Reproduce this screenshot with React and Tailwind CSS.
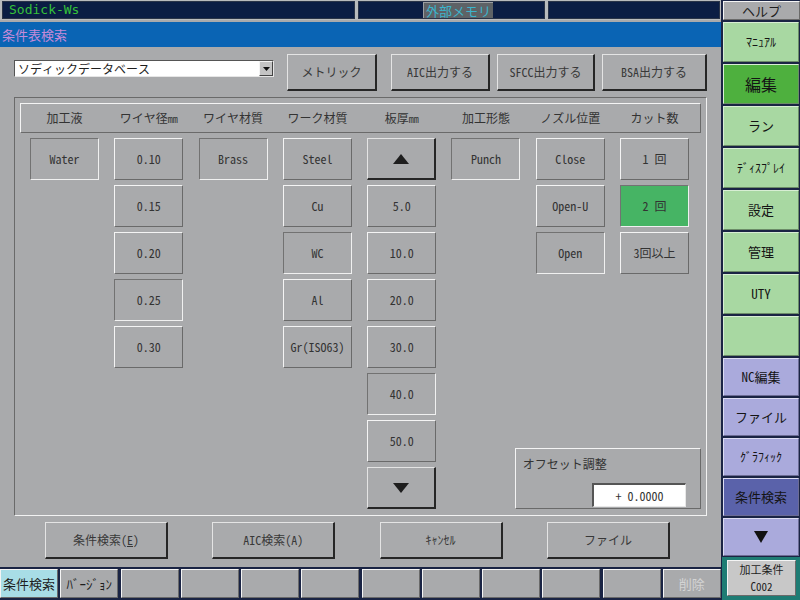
import React from 'react';

const up = "border border-t-[#f4f4f4] border-l-[#f4f4f4] border-b-[#6a6a6a] border-r-[#6a6a6a]";
const down = "border border-t-[#727272] border-l-[#727272] border-b-[#f0f0f0] border-r-[#f0f0f0]";
const heavy = "border-t border-l border-t-[#e4e4e4] border-l-[#e4e4e4] border-b-2 border-r-2 border-b-[#262626] border-r-[#262626]";

const TriUp = () => (
  <svg width="16" height="10" viewBox="0 0 16 10"><path d="M8 0 L16 10 L0 10Z" fill="#1e1e1e" /></svg>
);
const TriDown = () => (
  <svg width="16" height="10" viewBox="0 0 16 10"><path d="M0 0 L16 0 L8 10Z" fill="#1e1e1e" /></svg>
);

const cells = [
  { t: 'Water', s: 'down', c: 'col-start-1 row-start-1' },
  { t: '0.10', s: 'up', c: 'col-start-2 row-start-1' },
  { t: '0.15', s: 'up', c: 'col-start-2 row-start-2' },
  { t: '0.20', s: 'up', c: 'col-start-2 row-start-3' },
  { t: '0.25', s: 'down', c: 'col-start-2 row-start-4' },
  { t: '0.30', s: 'up', c: 'col-start-2 row-start-5' },
  { t: 'Brass', s: 'down', c: 'col-start-3 row-start-1' },
  { t: 'Steel', s: 'up', c: 'col-start-4 row-start-1' },
  { t: 'Cu', s: 'up', c: 'col-start-4 row-start-2' },
  { t: 'WC', s: 'down', c: 'col-start-4 row-start-3' },
  { t: 'Al', s: 'up', c: 'col-start-4 row-start-4' },
  { t: 'Gr(ISO63)', s: 'up', c: 'col-start-4 row-start-5' },
  { t: 'UP', s: 'arrow', c: 'col-start-5 row-start-1' },
  { t: '5.0', s: 'up', c: 'col-start-5 row-start-2' },
  { t: '10.0', s: 'up', c: 'col-start-5 row-start-3' },
  { t: '20.0', s: 'up', c: 'col-start-5 row-start-4' },
  { t: '30.0', s: 'up', c: 'col-start-5 row-start-5' },
  { t: '40.0', s: 'down', c: 'col-start-5 row-start-6' },
  { t: '50.0', s: 'up', c: 'col-start-5 row-start-7' },
  { t: 'DOWN', s: 'arrow', c: 'col-start-5 row-start-8' },
  { t: 'Punch', s: 'down', c: 'col-start-6 row-start-1' },
  { t: 'Close', s: 'up', c: 'col-start-7 row-start-1' },
  { t: 'Open-U', s: 'up', c: 'col-start-7 row-start-2' },
  { t: 'Open', s: 'down', c: 'col-start-7 row-start-3' },
  { t: '1 回', s: 'up', c: 'col-start-8 row-start-1' },
  { t: '2 回', s: 'green', c: 'col-start-8 row-start-2' },
  { t: '3回以上', s: 'up', c: 'col-start-8 row-start-3' },
];

const headers = [
  ['加工液', ''],
  ['ワイヤ径', 'mm'],
  ['ワイヤ材質', ''],
  ['ワーク材質', ''],
  ['板厚', 'mm'],
  ['加工形態', ''],
  ['ノズル位置', ''],
  ['カット数', ''],
];

function Cell({ t, s, c }) {
  let cls = up;
  if (s === 'down') cls = down;
  if (s === 'green') cls = down + ' bg-[#46b464]';
  if (s === 'arrow') cls = heavy;
  return (
    <div className={`${c} ${cls} flex items-center justify-center text-[12px] text-[#333] whitespace-nowrap`}>
      {t === 'UP' ? <TriUp /> : t === 'DOWN' ? <TriDown /> : t}
    </div>
  );
}

function TopBar() {
  return (
    <div className="h-[20px] bg-[#b9bbbd] flex items-stretch py-[1px] pl-[2px] pr-[1px] gap-[3px]">
      <div className="w-[353px] bg-[#0b1d44] border border-[#2a3448] flex items-center pl-[6px] text-[#35c23a] text-[13px] [font-family:'DejaVu_Sans_Mono',monospace]">
        Sodick-Ws
      </div>
      <div className="w-[187px] bg-[#0b1d44] border border-[#2a3448] flex items-stretch">
        <span className="ml-[64px] px-[2px] bg-[#5e6266] text-[#3cb4cc] text-[13px] leading-none flex items-center border-t border-l border-t-[#9a9ea2] border-l-[#9a9ea2]">
          外部メモリ
        </span>
      </div>
      <div className="flex-1 bg-[#0b1d44] border border-[#2a3448]" />
    </div>
  );
}

function Frame() {
  return (
    <div className="mt-[6px] w-[693px] border border-t-[#6a6a6a] border-l-[#6a6a6a] border-b-[#f2f2f2] border-r-[#f2f2f2] pt-[5px] px-[5px] pb-[6px]">
      <div className={`h-[30px] ${up} grid grid-cols-[repeat(8,69px)] gap-x-[15.3px] pl-[9px] items-center`}>
        {headers.map(([h, u]) => (
          <div key={h} className="text-center text-[12px] text-[#333] whitespace-nowrap">
            {h}
            {u && <span className="text-[10px]">{u}</span>}
          </div>
        ))}
      </div>
      <div className="mt-[5px] ml-[10px] grid grid-cols-[repeat(8,69px)] grid-rows-[repeat(8,42px)] gap-x-[15.3px] gap-y-[5px]">
        {cells.map((cell) => (
          <Cell key={cell.t} {...cell} />
        ))}
        <div className={`col-start-7 col-span-2 row-start-7 row-span-2 mt-[28px] -ml-[21px] -mr-[12px] ${up} flex flex-col pt-[8px] pl-[7px]`}>
          <div className="text-[12px] text-[#333] leading-[14px]">オフセット調整</div>
          <div className="mt-auto mb-[1px] self-end mr-[14px] w-[94px] h-[24px] bg-white border-t-2 border-l-2 border-t-[#555] border-l-[#555] border-b border-r border-b-[#e8e8e8] border-r-[#e8e8e8] flex items-center justify-center text-[12px] text-[#333]">
            + 0.0000
          </div>
        </div>
      </div>
    </div>
  );
}

function Main() {
  const btn = `${heavy} h-[37px] flex items-center justify-center text-[12px] text-[#383838] whitespace-nowrap`;
  return (
    <div className="h-[520px] flex flex-col pl-[14px] pt-[7px]">
      <div className="flex items-start h-[37px]">
        <div className="mt-[6px] w-[260px] h-[17px] bg-white border-t border-l border-t-[#555] border-l-[#555] border-b border-r border-b-[#e6e6e6] border-r-[#e6e6e6] flex items-center">
          <span className="flex-1 pl-[3px] text-[12px] text-[#1e1e1e] leading-none">ソディックデータベース</span>
          <div className="w-[14px] h-[15px] bg-[#c4c4c4] border border-t-[#f4f4f4] border-l-[#f4f4f4] border-b-[#444] border-r-[#444] flex items-center justify-center">
            <svg width="7" height="4" viewBox="0 0 7 4"><path d="M0 0 L7 0 L3.5 4Z" fill="#111" /></svg>
          </div>
        </div>
        <div className={`${btn} ml-[13px] w-[90px]`}>メトリック</div>
        <div className={`${btn} ml-[14px] w-[99px]`}>AIC出力する</div>
        <div className={`${btn} ml-[7px] w-[98px]`}>SFCC出力する</div>
        <div className={`${btn} ml-[7px] w-[105px]`}>BSA出力する</div>
      </div>
      <Frame />
      <div className="mt-[6px] flex pl-[31px] gap-[44.3px]">
        <div className={`${btn} w-[123px]`}>条件検索(<u>E</u>)</div>
        <div className={`${btn} w-[123px]`}>AIC検索(A)</div>
        <div className={`${btn} w-[123px]`}>ｷｬﾝｾﾙ</div>
        <div className={`${btn} w-[123px]`}>ファイル</div>
      </div>
    </div>
  );
}

function Tabs() {
  const labels = ['条件検索', 'ﾊﾞｰｼﾞｮﾝ', '', '', '', '', '', '', '', '', '', '削除'];
  return (
    <div className="h-[33px] bg-[#1a2444] flex gap-[2.25px] pt-[2px]">
      {labels.map((l, i) => (
        <div
          key={i}
          className={`w-[58px] h-[29px] flex items-center justify-center text-[13px] whitespace-nowrap ${up} ${
            i === 0 ? 'bg-[#a8dde6] text-[#1e1e1e]' : i === 11 ? 'bg-[#a9aaac] text-[#d4d4d4]' : 'bg-[#a9aaac] text-[#1e1e1e]'
          }`}
        >
          {l}
        </div>
      ))}
    </div>
  );
}

function Sidebar() {
  const g = "h-[40px] flex items-center justify-center text-[#141414] border border-t-[#d8eed4] border-l-[#d8eed4] border-b-[#6c8c68] border-r-[#6c8c68]";
  const p = "h-[38px] flex items-center justify-center text-[#141414] border border-t-[#dcdcf2] border-l-[#dcdcf2] border-b-[#6c6c94] border-r-[#6c6c94]";
  return (
    <div className="w-[79px] h-[600px] bg-[#1a2444] flex flex-col">
      <div className={`ml-[2px] mt-[1px] h-[19px] bg-[#a9aaac] ${up} flex items-center justify-center text-[13px] text-[#1e1e1e]`}>ヘルプ</div>
      <div className="mt-[2px] ml-[2px] mr-[1px] flex flex-col gap-[2px]">
        <div className={`${g} bg-[#a8d8a2] text-[12px]`}>ﾏﾆｭｱﾙ</div>
        <div className={`${g} bg-[#4eb03e] text-[16px]`}>編集</div>
        <div className={`${g} bg-[#a8d8a2] text-[13px]`}>ラン</div>
        <div className={`${g} bg-[#a8d8a2] text-[12px]`}>ﾃﾞｨｽﾌﾟﾚｲ</div>
        <div className={`${g} bg-[#a8d8a2] text-[13px]`}>設定</div>
        <div className={`${g} bg-[#a8d8a2] text-[13px]`}>管理</div>
        <div className={`${g} bg-[#a8d8a2] text-[13px]`}>UTY</div>
        <div className={`${g} bg-[#a8d8a2]`} />
      </div>
      <div className="mt-[2px] ml-[2px] mr-[1px] flex flex-col gap-[2px]">
        <div className={`${p} bg-[#aaaadc] text-[13px]`}>NC編集</div>
        <div className={`${p} bg-[#aaaadc] text-[13px]`}>ファイル</div>
        <div className={`${p} bg-[#aaaadc] text-[12px]`}>ｸﾞﾗﾌｨｯｸ</div>
        <div className={`${p} bg-[#5a62aa] text-[13px]`}>条件検索</div>
        <div className={`${p} bg-[#aaaadc]`}>
          <svg width="14" height="12" viewBox="0 0 14 12"><path d="M0 0 L14 0 L7 12Z" fill="#111" /></svg>
        </div>
      </div>
      <div className="mt-[1px] flex-1 bg-[#1e7c74] ml-[1px] pl-[5px] pr-[4px] pt-[3px] pb-[4px]">
        <div className={`h-full bg-[#c8c8c8] ${up} flex flex-col items-center justify-center text-[11px] text-[#1e1e1e]`}>
          <div className="leading-[17px]">加工条件</div>
          <div className="leading-[17px]">C002</div>
        </div>
      </div>
    </div>
  );
}

export default function App() {
  return (
    <div className="w-[800px] h-[600px] flex overflow-hidden bg-[#a9aaac] [font-family:'Noto_Sans_Mono_CJK_JP','Liberation_Mono','Noto_Sans_CJK_JP',monospace]">
      <div className="w-[721px] flex flex-col">
        <TopBar />
        <div className="mt-[2px] h-[25px] bg-[#0a64b4] flex items-center pl-[2px] text-[13px] text-[#c58ad8]">条件表検索</div>
        <Main />
        <Tabs />
      </div>
      <Sidebar />
    </div>
  );
}
